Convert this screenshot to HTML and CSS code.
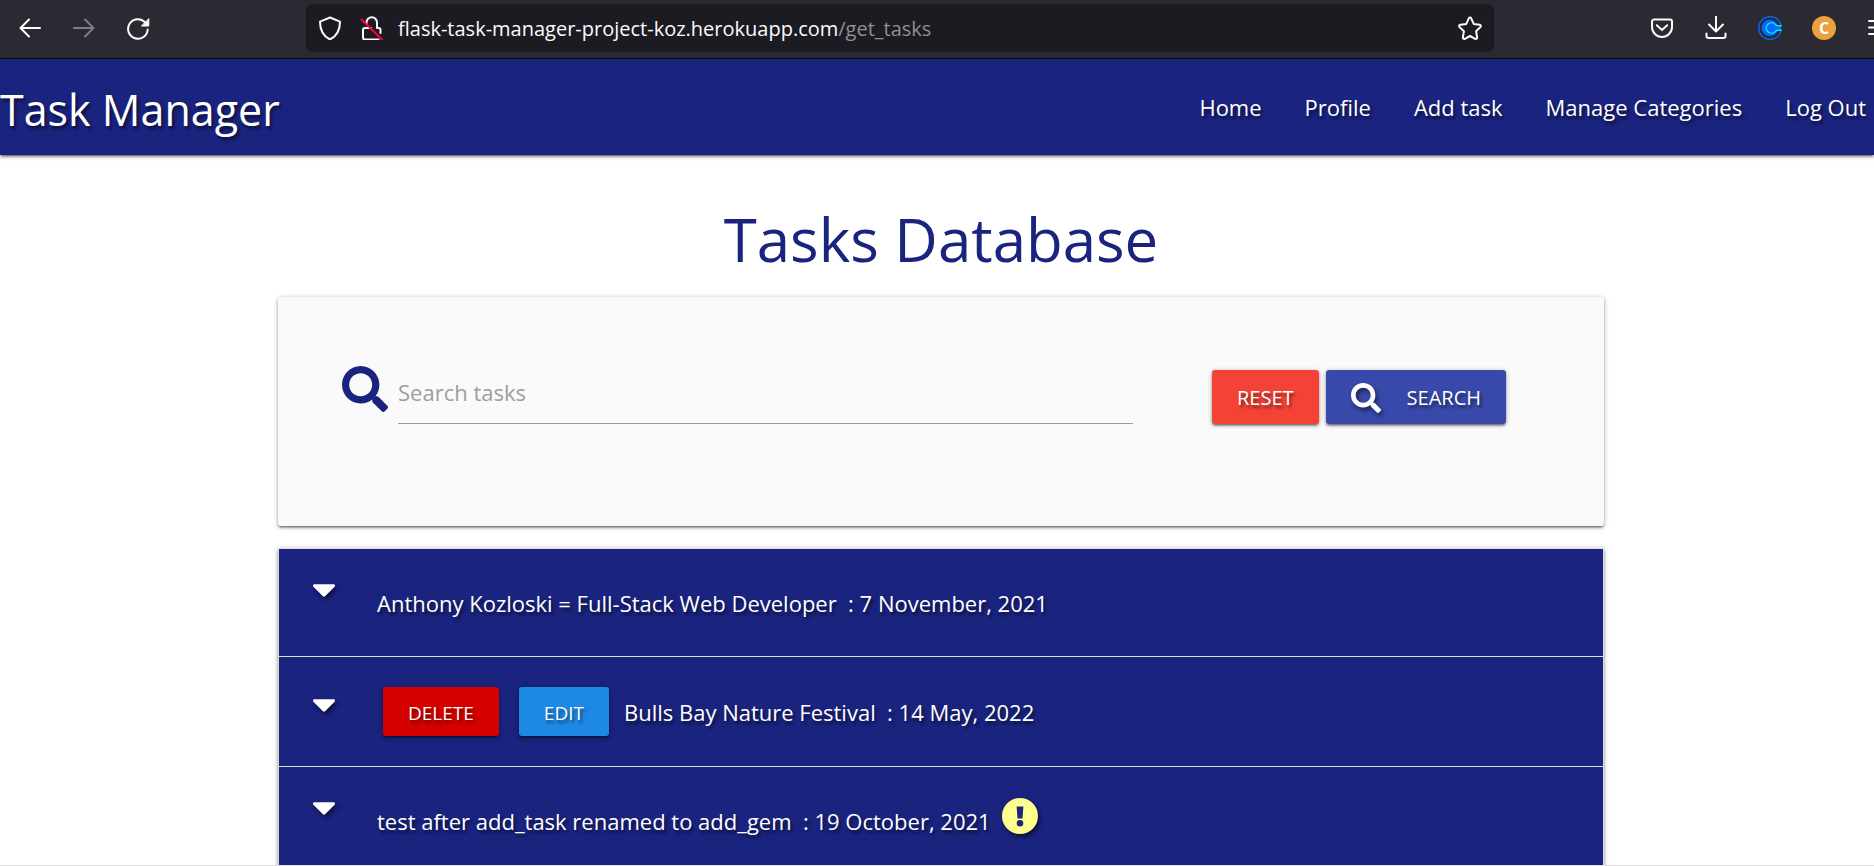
FILE: index.html
```html
<!DOCTYPE html>
<html lang="en">
<head>
<meta charset="utf-8">
<title>Task Manager</title>
<link rel="stylesheet" href="styles.css">
</head>
<body>
<svg class="defs" aria-hidden="true">
  <symbol id="search" viewBox="0 0 512 512"><path fill="currentColor" d="M505 442.700L405.300 343c-4.500-4.500-10.600-7-17-7H372c27.600-35.300 44-79.700 44-128C416 93.100 322.900 0 208 0S0 93.100 0 208s93.100 208 208 208c48.300 0 92.700-16.400 128-44v16.300c0 6.400 2.500 12.500 7 17l99.700 99.700c9.400 9.400 24.600 9.400 33.900 0l28.300-28.300c9.400-9.400 9.400-24.600.1-34zM208 336c-70.700 0-128-57.200-128-128 0-70.700 57.200-128 128-128 70.700 0 128 57.200 128 128 0 70.700-57.200 128-128 128z"/></symbol>
  <symbol id="caret" viewBox="12 190 296 172"><path fill="currentColor" d="M31.300 192h257.300c17.800 0 26.700 21.500 14.100 34.100L174.100 354.800c-7.800 7.800-20.500 7.800-28.300 0L17.200 226.100C4.600 213.500 13.500 192 31.300 192z"/></symbol>
</svg>
<div class="window">
  <header class="toolbar">
    <div class="tools">
      <button class="tool" aria-label="Back"><svg viewBox="0 0 24 24"><path d="M22 12H2.500M11 3.500L2.500 12l8.500 8.500"/></svg></button>
      <button class="tool tool-off" aria-label="Forward"><svg viewBox="0 0 24 24"><path d="M2 12h19.500M13 3.500l8.500 8.500-8.500 8.500"/></svg></button>
      <button class="tool" aria-label="Reload"><svg viewBox="0 0 24 24"><path d="M21.700 13.500A9.800 9.800 0 1 1 19 6.200"/><path class="solid" d="M22.800 3v7h-7z"/></svg></button>
    </div>
    <div class="address">
      <div class="site-icons">
        <svg viewBox="0 0 24 24"><path d="M12 1.500l10 4.200c0 8-2.800 14-10 17.800C4.800 19.700 2 13.700 2 5.700z"/></svg>
        <svg viewBox="0 0 24 24"><path d="M6.500 8V6.500a5 5 0 0 1 10.500 0V12h1.500a2 2 0 0 1 2 2v3M11 12H5a2 2 0 0 0-2 2v7.500a2 2 0 0 0 2 2h13.500"/><path class="strike" d="M1.500 3.500L22 23.500"/></svg>
      </div>
      <div class="url">flask-task-manager-project-koz.herokuapp.com<span class="path">/get_tasks</span></div>
      <button class="star" aria-label="Bookmark"><svg viewBox="0 0 24 24"><path d="M12 1.600c.6 0 1 .3 1.200.8l2.500 5.500 5.900.8c1.200.2 1.700 1.500.8 2.400l-4.300 4.200 1 6c.2 1.200-1 2-2 1.500L12 20l-5.100 2.800c-1 .5-2.200-.3-2-1.500l1-6-4.300-4.200c-.9-.9-.4-2.200.8-2.400l5.900-.8 2.500-5.500c.2-.5.600-.8 1.200-.8z"/></svg></button>
    </div>
    <div class="tools tools-end">
      <button class="tool" aria-label="Pocket"><svg viewBox="0 0 24 24"><path d="M4 3.500h16a2 2 0 0 1 2 2V11a10 10 0 0 1-20 0V5.500a2 2 0 0 1 2-2zM6.800 9.200L12 14l5.200-4.800"/></svg></button>
      <button class="tool" aria-label="Downloads"><svg viewBox="0 0 24 24"><path d="M12 0v15M5 8.500l7 7 7-7M2.500 17.500v2.500a2 2 0 0 0 2 2h15a2 2 0 0 0 2-2v-2.500"/></svg></button>
      <button class="tool" aria-label="Extension"><svg viewBox="0 0 24 24"><path class="ring" d="M23 9.200A11.300 11.300 0 1 0 23 14.800"/><circle class="disc" cx="11.800" cy="12" r="8.300"/><path class="cee" d="M23.200 9.800h-4.200l-2.500-2a5.200 5.200 0 1 0 0 8.400l2.500-2h4.200"/></svg></button>
      <button class="tool" aria-label="Account"><span class="avatar">C</span></button>
      <button class="tool" aria-label="Menu"><svg viewBox="0 0 24 24"><path d="M3 5h18M3 11.500h18M3 18h18"/></svg></button>
    </div>
  </header>
  <div class="page">
    <nav class="nav">
      <a class="brand" href="#">Task Manager</a>
      <div class="links">
        <a href="#">Home</a><a href="#">Profile</a><a href="#">Add task</a><a href="#">Manage Categories</a><a href="#">Log Out</a>
      </div>
    </nav>
    <main class="content">
      <h1 class="title">Tasks Database</h1>
      <form class="card">
        <label class="field">
          <svg class="field-icon" aria-label="Search"><use href="#search"/></svg>
          <input class="query" type="text" placeholder="Search tasks">
        </label>
        <div class="buttons">
          <button class="btn btn-reset" type="reset">RESET</button>
          <button class="btn btn-search" type="button"><svg class="btn-icon"><use href="#search"/></svg>SEARCH</button>
        </div>
      </form>
      <ul class="tasks">
        <li class="task"><svg class="caret"><use href="#caret"/></svg><span>Anthony Kozloski = Full-Stack Web Developer &nbsp;: 7 November, 2021</span></li>
        <li class="task task-own"><svg class="caret"><use href="#caret"/></svg><div class="actions"><button class="btn btn-small btn-delete">DELETE</button><button class="btn btn-small btn-edit">EDIT</button></div><span>Bulls Bay Nature Festival &nbsp;: 14 May, 2022</span></li>
        <li class="task"><svg class="caret"><use href="#caret"/></svg><span>test after add_task renamed to add_gem &nbsp;: 19 October, 2021</span><svg class="urgent" viewBox="0 0 36 36" aria-label="Urgent"><circle cx="18" cy="18" r="18" fill="#ffff8d"/><path fill="#1a237e" d="M14.600 8.500h6.800l-.9 12h-5zM21.300 25.200a3.300 3.300 0 1 1-6.600 0 3.300 3.300 0 0 1 6.600 0z"/></svg></li>
      </ul>
    </main>
  </div>
</div>
</body>
</html>
```
FILE: styles.css
```css
* { box-sizing: border-box; }

body {
  --lift: 0 2px 2px 0 rgba(0, 0, 0, 0.26), 0 3px 1px -2px rgba(0, 0, 0, 0.22), 0 1px 5px 0 rgba(0, 0, 0, 0.3);
  margin: 0;
  font-family: "Open Sans", "Noto Sans", sans-serif;
  font-size: 22px;
  line-height: 32px;
  color: #fff;
  background: #fff;
}

button, input { font: inherit; color: inherit; border: 0; background: none; }
a { color: inherit; text-decoration: none; }
.defs { display: none; }

.window {
  display: flex;
  flex-direction: column;
  height: 100vh;
  overflow: hidden;
  border-bottom: 1px solid #e0e0e0;
}

/* Browser toolbar */
.toolbar {
  display: flex;
  flex: none;
  gap: 141px;
  padding: 4px 0 6px 3px;
  background: #2b2a33;
  border-bottom: 1px solid #0c0c0d;
}
.tools { display: flex; align-items: center; flex: none; }
.tools-end { margin-right: -31px; }
.tool {
  display: flex;
  justify-content: center;
  width: 54px;
  padding: 0;
}
.tool-off { opacity: 0.4; }
.toolbar svg {
  flex: none;
  width: 24px;
  height: 24px;
  fill: none;
  stroke: #fbfbfe;
  stroke-width: 2;
  stroke-linecap: round;
  stroke-linejoin: round;
}
.toolbar .solid { fill: #fbfbfe; stroke-width: 1; }
.toolbar .strike { stroke: #ff0039; }
.toolbar .ring { stroke: #006bff; stroke-width: 1.4; }
.toolbar .disc { fill: #006bff; stroke: none; }
.toolbar .cee { fill: #006bff; stroke: #0ae8f0; stroke-width: 1.4; }
.avatar {
  width: 24px;
  height: 24px;
  border-radius: 50%;
  background: #eda03e;
  font-size: 16px;
  font-weight: 700;
  line-height: 24px;
  text-align: center;
}
.address {
  display: flex;
  flex: 1;
  align-items: center;
  gap: 14px;
  height: 48px;
  min-width: 0;
  padding: 0 12px;
  border-radius: 6px;
  background: #1c1b22;
}
.site-icons { display: flex; gap: 18px; }
.url {
  flex: 1;
  padding-top: 2px;
  font-size: 20px;
  color: #fbfbfe;
  white-space: nowrap;
}
.path { color: #8f8f96; }
.star { display: flex; padding: 0; }

/* Page */
.page { flex: 1; min-height: 0; overflow: hidden; }
.nav {
  display: flex;
  justify-content: space-between;
  align-items: center;
  height: 96px;
  padding-right: 8px;
  background: #1a237e;
  box-shadow: var(--lift);
  text-shadow: 2px 3px 3px rgba(0, 0, 0, 0.5);
}
.brand { font-size: 43px; line-height: 60px; padding-top: 6px; }
.links { display: flex; gap: 43px; }

.content { padding: 0 270px 0 278px; }
.title {
  margin: 0;
  padding: 42px 0 16px;
  font-size: 60px;
  font-weight: 400;
  line-height: 84px;
  text-align: center;
  color: #1a237e;
}
.card {
  display: flex;
  gap: 79px;
  margin: 0 0 22px;
  padding: 69px 98px 102px 64px;
  border-radius: 3px;
  background: #fafafa;
  box-shadow: var(--lift);
}
.field { display: flex; flex: 1; gap: 10px; }
.field-icon { flex: none; width: 46px; height: 46px; color: #1a237e; }
.query {
  flex: 1;
  min-width: 0;
  height: 58px;
  padding: 0 0 6px;
  border-bottom: 1px solid #9e9e9e;
  border-radius: 0;
  outline: none;
  color: #1a237e;
}
.query::placeholder { color: #9e9e9e; opacity: 1; }
.buttons { display: flex; align-items: flex-end; gap: 7px; }
.btn {
  display: flex;
  align-items: center;
  justify-content: center;
  height: 54px;
  padding: 2px 25px 0;
  border-radius: 3px;
  font-size: 20px;
  box-shadow: var(--lift);
  text-shadow: 2px 3px 3px rgba(0, 0, 0, 0.5);
}
.btn-reset { background: #f44336; }
.btn-search { gap: 26px; background: #3949ab; }
.btn-icon, .caret, .urgent { flex: none; filter: drop-shadow(2px 3px 2px rgba(0, 0, 0, 0.5)); }
.btn-icon { width: 30px; height: 30px; }
.btn-small { height: 49px; font-size: 19px; }
.btn-delete { background: #d50000; }
.btn-edit { background: #1e88e5; }

.tasks {
  margin: 0;
  padding: 0;
  list-style: none;
  border: 1px solid #ddd;
  background: #1a237e;
  box-shadow: var(--lift);
  text-shadow: 2px 3px 3px rgba(0, 0, 0, 0.5);
}
.task {
  display: flex;
  align-items: center;
  height: 108px;
  padding: 0 34px;
  border-bottom: 1px solid #ddd;
}
.task-own { height: 110px; }
.caret {
  align-self: flex-start;
  width: 22px;
  height: 13px;
  margin: 35px 42px 0 0;
}
.task-own .caret { margin-top: 42px; }
.actions { display: flex; gap: 20px; padding: 0 15px 0 6px; }
.urgent { width: 36px; height: 36px; margin: 0 0 10px 11px; }
```
